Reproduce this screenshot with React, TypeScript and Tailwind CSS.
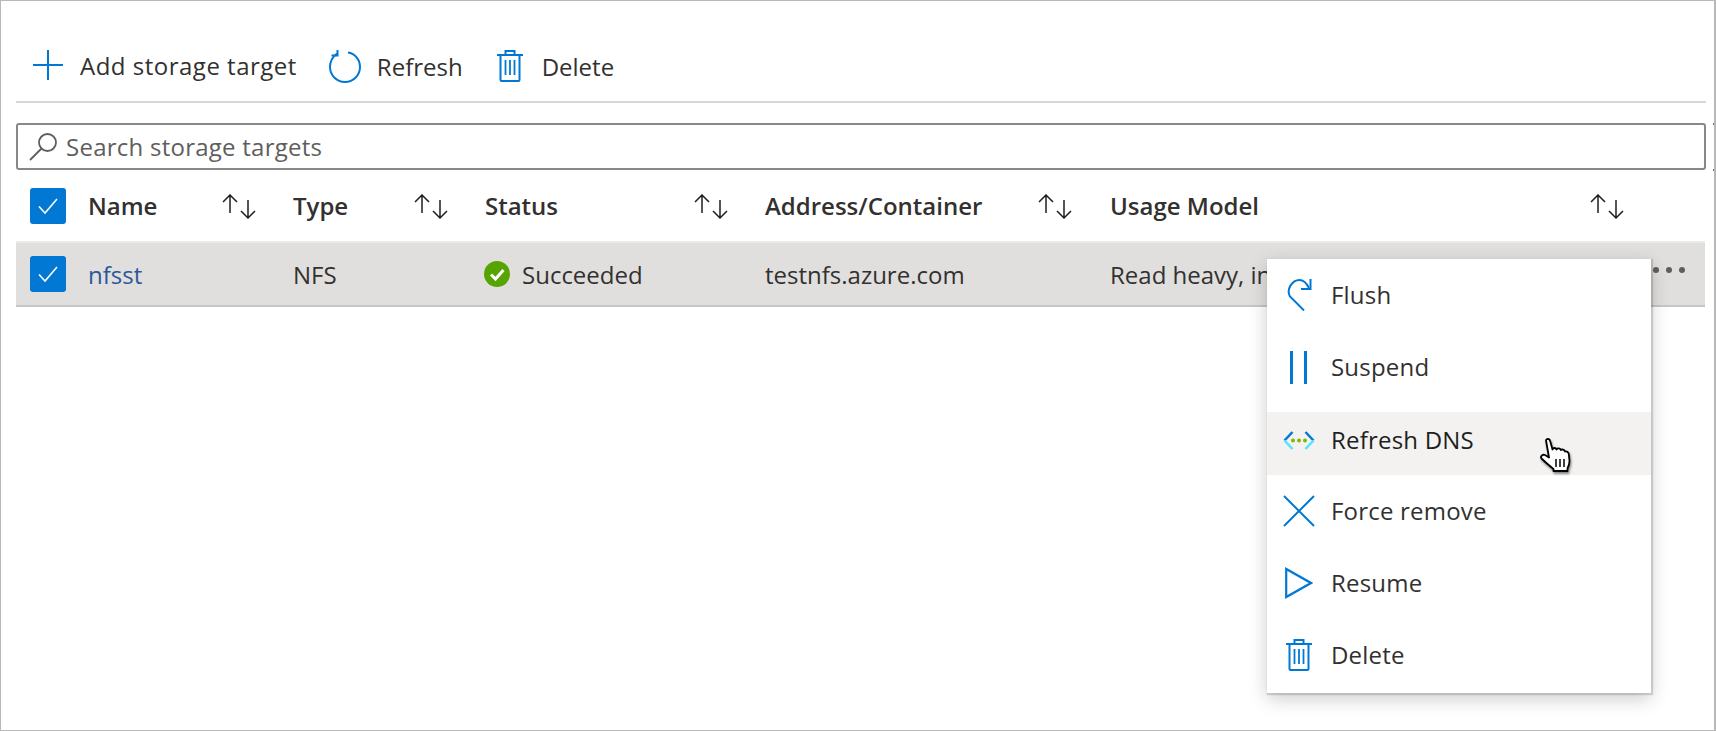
const BLUE = "#0078d4"

function PlusIcon() {
  return (
    <svg width="30" height="30" viewBox="0 0 30 30" fill="none" stroke={BLUE} strokeWidth="2">
      <path d="M15 0V30M0 15H30" />
    </svg>
  )
}

function RefreshIcon() {
  return (
    <svg width="32" height="33" viewBox="0 0 32 33" fill="none" stroke={BLUE} strokeWidth="2">
      <path d="M19 2.600C26 3.600 31 9.400 31 16.800C31 25 24.600 32 16 32C7.400 32 1 25 1 16.800C1 11.500 3.500 7 8 3.500" />
      <path d="M8.500 0V5.500H2.500" />
    </svg>
  )
}

function TrashIcon() {
  return (
    <svg width="26" height="32" viewBox="0 0 26 32" fill="none" stroke={BLUE} strokeWidth="2">
      <path d="M0 5H26M8.500 5V1H17.500V5M3.500 5V30C3.500 30.600 4 31 4.500 31H21.500C22 31 22.500 30.600 22.500 30V5" />
      <path d="M8.500 10V25M13 10V25M17.500 10V25" strokeWidth="1.800" />
    </svg>
  )
}

function SearchIcon() {
  return (
    <svg width="28" height="28" viewBox="0 0 28 28" fill="none" stroke="#605e5c" strokeWidth="1.800">
      <circle cx="18.500" cy="9.500" r="8.500" />
      <path d="M12.500 15.500L1 27" />
    </svg>
  )
}

function SortIcon() {
  return (
    <svg width="34" height="25" viewBox="0 0 34 25" fill="none" stroke="#201f1e" strokeWidth="1.500">
      <path d="M8 1V19M1 8L8 1L15 8" />
      <path d="M26 6V24M19 17L26 24L33 17" />
    </svg>
  )
}

function Checkbox() {
  return (
    <div className="flex h-[36px] w-[36px] items-center justify-center rounded-[3px] bg-[#0078d4]">
      <svg width="22" height="18" viewBox="0 0 22 18" fill="none" stroke="#fff" strokeWidth="1.600">
        <path d="M2 9.500L8 16L20 2" />
      </svg>
    </div>
  )
}

function StatusIcon() {
  return (
    <svg width="26" height="26" viewBox="0 0 26 26">
      <circle cx="13" cy="13" r="13" fill="#57a300" />
      <path d="M7 13.500L11.500 18L19.500 9" fill="none" stroke="#fff" strokeWidth="3" />
    </svg>
  )
}

function FlushIcon() {
  return (
    <svg width="25" height="32" viewBox="0 0 25 32" fill="none" stroke={BLUE} strokeWidth="2">
      <path d="M17 31.500L3 17.500C-1 10.500 5 1 12.500 1C16.500 1 19.500 4 22 9" />
      <path d="M23.500 0V10H14" />
    </svg>
  )
}

function SuspendIcon() {
  return (
    <svg width="18" height="33" viewBox="0 0 18 33" fill={BLUE}>
      <rect x="0" y="0" width="3" height="33" />
      <rect x="14" y="0" width="3" height="33" />
    </svg>
  )
}

function DnsIcon() {
  return (
    <svg width="32" height="19" viewBox="0 0 32 19" fill="none" strokeWidth="2.500">
      <path d="M9.500 1L1.500 9.500" stroke="#0078d4" />
      <path d="M1.500 9.500L9.500 18" stroke="#50e6ff" />
      <path d="M22.500 1L30.500 9.500" stroke="#0078d4" />
      <path d="M30.500 9.500L22.500 18" stroke="#50e6ff" />
      <circle cx="10" cy="9.500" r="2" fill="#7fba00" />
      <circle cx="16" cy="9.500" r="2" fill="#7fba00" />
      <circle cx="22" cy="9.500" r="2" fill="#7fba00" />
    </svg>
  )
}

function RemoveIcon() {
  return (
    <svg width="32" height="32" viewBox="0 0 32 32" fill="none" stroke={BLUE} strokeWidth="2">
      <path d="M1 1L31 31M31 1L1 31" />
    </svg>
  )
}

function ResumeIcon() {
  return (
    <svg width="28" height="32" viewBox="0 0 28 32" fill="none" stroke={BLUE} strokeWidth="2.200">
      <path d="M1.200 2V30L26 16Z" />
    </svg>
  )
}

function HandCursor() {
  return (
    <svg className="absolute left-[1539px] top-[437px] drop-shadow-[1px_2px_1px_rgba(0,0,0,0.45)]" width="32" height="35" viewBox="0 0 32 35">
      <path
        d="M6 2.500C6 .5 9.500 .5 10 2.500L12.500 11.500C13 9.500 16 9.500 16.500 11.500C17.500 10 20 10 20.800 12C22 11 24.500 11.500 25 13.500C26.500 13 28.500 14 28.800 16L29.500 23C29.500 26 28.500 28.500 27.500 30.500V33H13.500V31C10.500 28.500 6 25 1.500 20.500C0 18.500 2.500 16 5 17L9 19.500Z"
        fill="#fff"
        stroke="#000"
        strokeWidth="1.800"
        strokeLinejoin="round"
      />
      <path d="M16 21V29M20 21V29M24 21V29" stroke="#000" strokeWidth="1.500" />
    </svg>
  )
}

function HeaderCell({ label, className }: { label: string; className: string }) {
  return (
    <div className={`flex items-center justify-between font-semibold ${className}`}>
      <span>{label}</span>
      <SortIcon />
    </div>
  )
}

function MenuItem({ icon, label }: { icon: React.ReactNode; label: string }) {
  return (
    <div className="flex h-[72px] items-center">
      <div className="flex w-[64px] justify-center">{icon}</div>
      <span className="-mt-[1px] tracking-[0.2px]">{label}</span>
    </div>
  )
}

export default function App() {
  return (
    <div
      className="relative h-[731px] w-[1716px] overflow-hidden border border-r-2 border-[#b8b8b8] bg-white pl-[15px] pr-[8px] text-[24px] leading-none text-[#323130]"
      style={{ fontFamily: '"Open Sans", sans-serif' }}
    >
      {/* Toolbar */}
      <div className="flex h-[102px] items-start border-b-2 border-[#d6d6d6] pl-[17px] pt-[49px]">
        <div className="flex items-center">
          <PlusIcon />
          <span className="ml-[17px] mt-[1px] tracking-[0.5px]">Add storage target</span>
        </div>
        <div className="ml-[32px] flex items-center">
          <RefreshIcon />
          <span className="ml-[16px] mt-[1px]">Refresh</span>
        </div>
        <div className="ml-[34px] flex items-center">
          <TrashIcon />
          <span className="ml-[19px] mt-[1px]">Delete</span>
        </div>
      </div>

      {/* Search */}
      <div className="mt-[20px] flex h-[47px] items-center rounded-[3px] border-2 border-[#8a8886] pl-[11px]">
        <SearchIcon />
        <span className="ml-[9px] tracking-[0.25px] text-[#605e5c]">Search storage targets</span>
      </div>

      {/* Header */}
      <div className="mt-[18px] grid h-[36px] w-[1689px] grid-cols-[72px_205px_192px_280px_345px_595px] items-center text-[#323130]">
        <div className="pl-[14px]">
          <Checkbox />
        </div>
        <HeaderCell label="Name" className="pr-[37px]" />
        <HeaderCell label="Type" className="pr-[37px]" />
        <HeaderCell label="Status" className="pr-[37px]" />
        <HeaderCell label="Address/Container" className="pr-[38px]" />
        <HeaderCell label="Usage Model" className="pr-[81px]" />
      </div>

      {/* Row */}
      <div className="mt-[17px] grid h-[66px] w-[1689px] grid-cols-[72px_205px_192px_280px_345px_595px] items-center border-y-2 border-t-[#ebeae8] border-b-[#c8c6c4] bg-[#e0dfdd]">
        <div className="pl-[14px]">
          <Checkbox />
        </div>
        <span className="mt-[2px] text-[#2b579a]">nfsst</span>
        <span className="mt-[2px]">NFS</span>
        <div className="flex items-center">
          <span className="-ml-[1px]">
            <StatusIcon />
          </span>
          <span className="ml-[12px] mt-[2px]">Succeeded</span>
        </div>
        <span className="mt-[2px]">testnfs.azure.com</span>
        <div className="flex items-center justify-between pr-[20px]">
          <span className="mt-[2px] whitespace-nowrap">Read heavy, infrequent writes</span>
          <div className="-mt-[8px] flex gap-[7px]">
            <span className="h-[6px] w-[6px] rounded-full bg-[#605e5c]" />
            <span className="h-[6px] w-[6px] rounded-full bg-[#605e5c]" />
            <span className="h-[6px] w-[6px] rounded-full bg-[#605e5c]" />
          </div>
        </div>
      </div>

      {/* Context menu */}
      <div className="absolute left-[1266px] top-[258px] h-[434px] w-[384px] bg-white shadow-[1px_1px_1px_1px_rgba(0,0,0,0.14),0_6px_18px_rgba(0,0,0,0.2)]">
        <MenuItem icon={<FlushIcon />} label="Flush" />
        <MenuItem icon={<SuspendIcon />} label="Suspend" />
        <div className="flex h-[72px] items-end">
          <div className="flex h-[63px] w-full items-center bg-[#f3f2f1] pb-[6px] text-[#201f1e]">
            <div className="flex w-[64px] justify-center">
              <DnsIcon />
            </div>
            <span className="-mt-[2px] tracking-[0.2px]">Refresh DNS</span>
          </div>
        </div>
        <MenuItem icon={<RemoveIcon />} label="Force remove" />
        <MenuItem icon={<ResumeIcon />} label="Resume" />
        <MenuItem icon={<TrashIcon />} label="Delete" />
      </div>

      <HandCursor />

      {/* Ticks at the right edge of the search box */}
      <span className="absolute left-[1712px] top-[122px] h-[2px] w-[2px] bg-[#6b6b6b]" />
      <span className="absolute left-[1712px] top-[168px] h-[2px] w-[2px] bg-[#6b6b6b]" />
    </div>
  )
}
